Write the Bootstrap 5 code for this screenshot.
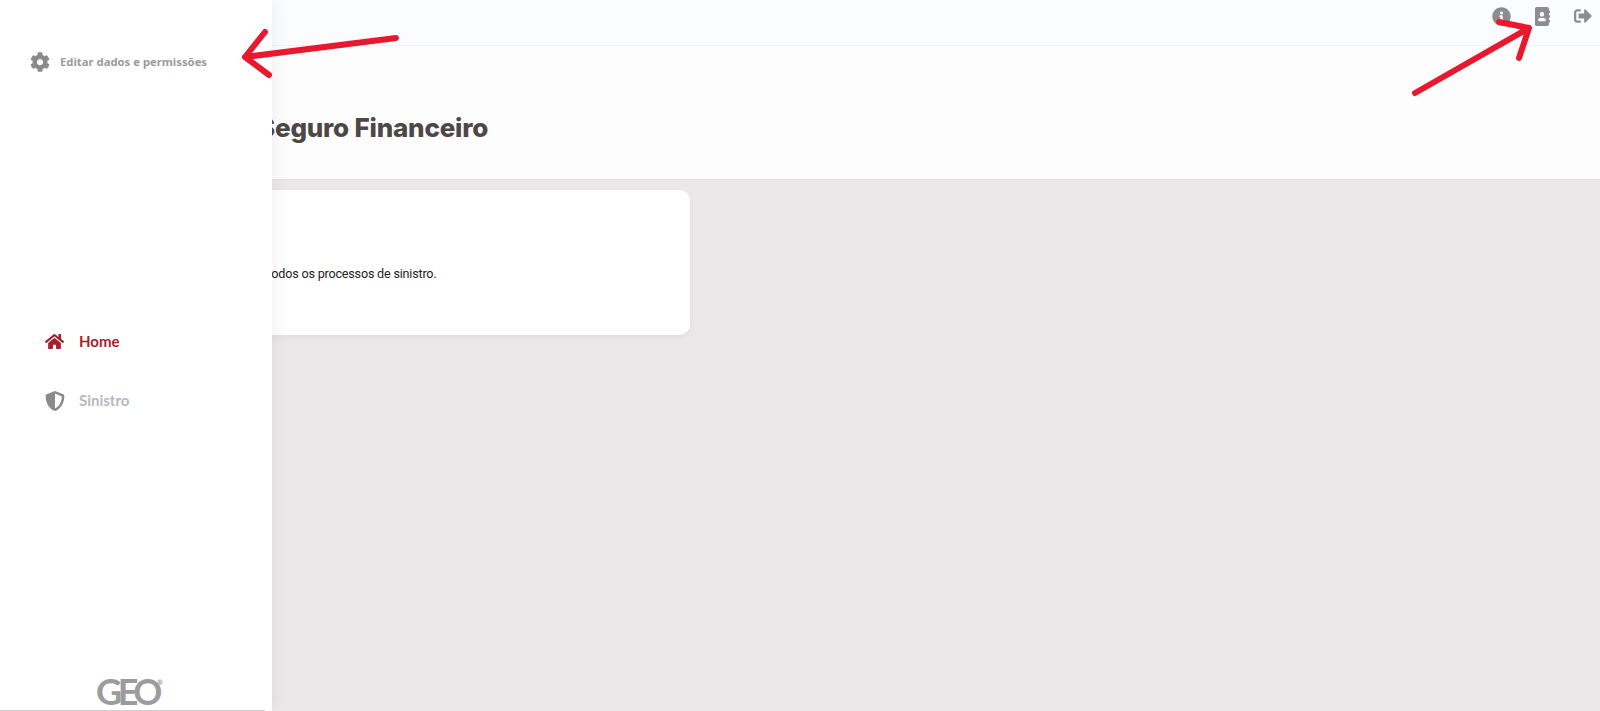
<!DOCTYPE html>
<html lang="pt-BR">
<head>
    <meta charset="UTF-8">
    <meta name="viewport" content="width=device-width, initial-scale=1.0">
    <title>Seguro Financeiro</title>
    <link href="https://cdn.jsdelivr.net/npm/bootstrap@5.3.0/dist/css/bootstrap.min.css" rel="stylesheet">
    <style>
        html, body { height: 100%; overflow: hidden; }
        body { background: #eae8e9; font-family: "Open Sans", "Liberation Sans", sans-serif; }
        .page-wrap { height: 711px; }
        .top-strip { height: 46px; background: #fbfcfe; border-bottom: 1px solid #f3f3f6; padding: 7px 8px 0 0; gap: 24px; }
        .top-strip svg { fill: #8d8d8d; }
        .title-strip { height: 134px; background: #fdfdfe; border-bottom: 1px solid #e4e2e3; padding-left: 258px; padding-top: 67px; }
        .title-strip h1 { font-family: "Inter", sans-serif; font-weight: 800; font-size: 26px; line-height: 30px; color: #4d4846; margin: 0; letter-spacing: -.2px; }
        .info-card { width: 590px; height: 145px; margin: 10px 0 0 100px; border: 0; border-radius: 10px; box-shadow: 0 2px 6px rgba(0,0,0,.05); }
        .info-card p { font-family: "Roboto", sans-serif; font-size: 12.6px; letter-spacing: -.2px; color: #222; margin: 0; padding: 75px 0 0 44px; }
        .side-panel { position: absolute; top: 0; left: 0; width: 272px; height: 711px; background: #fff; box-shadow: 0 0 18px rgba(0,0,0,.07); }
        .edit-link { font-family: "Noto Sans", sans-serif; font-size: 11.3px; font-weight: 700; color: #9b9b9b; padding: 52px 0 0 30px; gap: 10px; line-height: 20px; }
        .edit-link svg { fill: #8a8a8a; }
        .side-menu { margin-top: 240px; }
        .side-item { font-family: "Lato", sans-serif; font-size: 15px; font-weight: 700; height: 59px; padding-left: 45px; gap: 15px; color: #b5b8c2; }
        .side-item .item-ico { width: 19px; text-align: center; line-height: 0; }
        .side-item.is-active { color: #a51f2b; }
        .side-item.is-active svg { fill: #a51f2b; }
        .side-item svg { fill: #8a8a8a; }
        .geo-logo { margin-left: 96px; display: block; }
        .geo-logo text { font-family: "Lato", sans-serif; font-weight: 700; font-size: 36px; letter-spacing: -4.5px; fill: #9c9c9c; }
        .geo-logo .geo-reg { font-size: 7px; letter-spacing: 0; }
        .side-foot { border-bottom: 1px solid #cfcfcf; width: 265px; height: 2px; }
        .mark-arrow { position: absolute; top: 0; left: 0; width: 1600px; height: 711px; pointer-events: none; }
        .mark-arrow path { fill: none; stroke: #e8192f; stroke-width: 6; stroke-linecap: round; stroke-linejoin: round; }
    </style>
</head>
<body>
    <div class="page-wrap position-relative">
        <!-- Main content, partly behind the side panel -->
        <div class="d-flex align-items-start justify-content-end top-strip">
            <svg width="19" height="19" viewBox="0 0 512 512"><path d="M256 8C119 8 8 119.1 8 256c0 137 111 248 248 248s248-111 248-248C504 119.1 393 8 256 8zm0 110c23.2 0 42 18.8 42 42s-18.8 42-42 42-42-18.8-42-42 18.8-42 42-42zm56 254c0 6.6-5.4 12-12 12h-88c-6.6 0-12-5.4-12-12v-24c0-6.6 5.4-12 12-12h12v-64h-12c-6.6 0-12-5.4-12-12v-24c0-6.6 5.4-12 12-12h64c6.6 0 12 5.4 12 12v100h12c6.6 0 12 5.4 12 12v24z"/></svg>
            <svg width="15" height="19" viewBox="0 0 448 512" preserveAspectRatio="none"><path d="M436 160c6.6 0 12-5.4 12-12v-40c0-6.6-5.4-12-12-12h-20V48c0-26.5-21.5-48-48-48H48C21.5 0 0 21.5 0 48v416c0 26.5 21.5 48 48 48h320c26.5 0 48-21.5 48-48v-48h20c6.6 0 12-5.4 12-12v-40c0-6.6-5.4-12-12-12h-20v-64h20c6.6 0 12-5.4 12-12v-40c0-6.6-5.4-12-12-12h-20v-64h20zm-228-32c35.3 0 64 28.7 64 64s-28.7 64-64 64-64-28.7-64-64 28.7-64 64-64zm112 236.8c0 10.6-10 19.2-22.4 19.2H118.4C106 384 96 375.4 96 364.8v-19.2c0-31.8 30.1-57.6 67.2-57.6h5c12.3 5.1 25.7 8 39.8 8s27.6-2.9 39.8-8h5c37.1 0 67.2 25.8 67.2 57.6v19.2z"/></svg>
            <svg width="18" height="18" viewBox="0 0 512 512"><path d="M497 273L329 441c-15 15-41 4.5-41-17v-96H152c-13.3 0-24-10.7-24-24v-96c0-13.3 10.7-24 24-24h136V88c0-21.4 25.9-32 41-17l168 168c9.3 9.4 9.3 24.6 0 34zM192 436v-40c0-6.6-5.4-12-12-12H96c-17.7 0-32-14.3-32-32V160c0-17.7 14.3-32 32-32h84c6.6 0 12-5.4 12-12V76c0-6.6-5.4-12-12-12H96c-53 0-96 43-96 96v192c0 53 43 96 96 96h84c6.6 0 12-5.4 12-12z"/></svg>
        </div>
        <div class="title-strip">
            <h1>Seguro Financeiro</h1>
        </div>
        <div class="card info-card">
            <p>Aqui você acompanha todos os processos de sinistro.</p>
        </div>

        <!-- Side panel lying over the content -->
        <aside class="side-panel d-flex flex-column">
            <div class="d-flex align-items-center edit-link">
                <svg width="20" height="20" viewBox="0 0 512 512"><path d="M487.4 315.7l-42.6-24.6c4.3-23.2 4.3-47 0-70.2l42.6-24.6c4.9-2.8 7.1-8.6 5.5-14-11.1-35.6-30-67.8-54.7-94.6-3.8-4.1-10-5.1-14.8-2.3L380.8 110c-17.9-15.4-38.5-27.3-60.8-35.1V25.8c0-5.6-3.9-10.5-9.4-11.7-36.7-8.2-74.3-7.8-109.2 0-5.5 1.2-9.4 6.1-9.4 11.7V75c-22.2 7.9-42.8 19.8-60.8 35.1L88.7 85.5c-4.9-2.8-11-1.9-14.8 2.3-24.7 26.7-43.6 58.9-54.7 94.6-1.7 5.4.6 11.2 5.5 14L67.3 221c-4.3 23.2-4.3 47 0 70.2l-42.6 24.6c-4.9 2.8-7.1 8.6-5.5 14 11.1 35.6 30 67.8 54.7 94.6 3.8 4.1 10 5.1 14.8 2.3l42.6-24.6c17.9 15.4 38.5 27.3 60.8 35.1v49.2c0 5.6 3.9 10.5 9.4 11.7 36.7 8.2 74.3 7.8 109.2 0 5.5-1.2 9.4-6.1 9.4-11.7v-49.2c22.2-7.9 42.8-19.8 60.8-35.1l42.6 24.6c4.9 2.8 11 1.9 14.8-2.3 24.7-26.7 43.6-58.9 54.7-94.6 1.5-5.5-.7-11.3-5.6-14.1zM256 336c-44.1 0-80-35.9-80-80s35.9-80 80-80 80 35.9 80 80-35.9 80-80 80z"/></svg>
                <span>Editar dados e permissões</span>
            </div>
            <div class="side-menu">
                <div class="d-flex align-items-center side-item is-active">
                    <span class="item-ico"><svg width="19" height="17" viewBox="0 0 576 512"><path d="M280.37 148.26L96 300.11V464a16 16 0 0 0 16 16l112.06-.29a16 16 0 0 0 15.92-16V368a16 16 0 0 1 16-16h64a16 16 0 0 1 16 16v95.64a16 16 0 0 0 16 16.05L464 480a16 16 0 0 0 16-16V300L295.67 148.26a12.19 12.19 0 0 0-15.3 0zM571.6 251.47L488 182.56V44.05a12 12 0 0 0-12-12h-56a12 12 0 0 0-12 12v72.61L318.47 43a48 48 0 0 0-61 0L4.34 251.47a12 12 0 0 0-1.6 16.9l25.5 31A12 12 0 0 0 45.15 301l235.22-193.74a12.19 12.19 0 0 1 15.3 0L530.9 301a12 12 0 0 0 16.9-1.6l25.5-31a12 12 0 0 0-1.7-16.93z"/></svg></span>
                    <span>Home</span>
                </div>
                <div class="d-flex align-items-center side-item">
                    <span class="item-ico"><svg width="20" height="22" viewBox="0 0 512 512"><path d="M466.5 83.7l-192-80a48.15 48.15 0 0 0-36.9 0l-192 80C27.7 91.1 16 108.6 16 128c0 198.5 114.5 335.7 221.5 380.3 11.8 4.9 25.1 4.9 36.9 0C360.1 472.6 496 349.3 496 128c0-19.4-11.7-36.9-29.5-44.3zM256.1 446.3l-.1-381 175.9 73.3c-3.3 151.4-82.1 261.1-175.8 307.7z"/></svg></span>
                    <span>Sinistro</span>
                </div>
            </div>
            <div class="mt-auto">
                <svg class="geo-logo" width="72" height="32" viewBox="0 0 72 32">
                    <text x="0" y="28">GEO</text>
                    <text class="geo-reg" x="61" y="8">®</text>
                </svg>
                <div class="side-foot"></div>
            </div>
        </aside>

        <!-- Red annotation arrows drawn over the screenshot -->
        <svg class="mark-arrow" viewBox="0 0 1600 711">
            <path d="M396 38 L245 57 M265 32 L245 57 L269 75"/>
            <path d="M1415 93 L1529 28 M1499 22 L1529 28 L1519 58"/>
        </svg>
    </div>
    <script src="https://cdn.jsdelivr.net/npm/bootstrap@5.3.0/dist/js/bootstrap.bundle.min.js"></script>
</body>
</html>
